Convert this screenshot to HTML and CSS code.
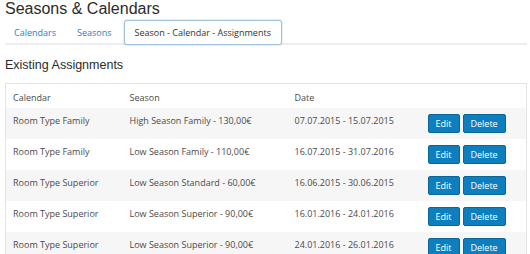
FILE: index.html
```html
<!DOCTYPE html>
<html lang="en">
<head>
<meta charset="utf-8">
<title>Seasons &amp; Calendars</title>
<link rel="stylesheet" href="styles.css">
</head>
<body>
<h1 class="title">Seasons &amp; Calendars</h1>
<ul class="tabs">
  <li class="tab"><a class="tab-link" href="#">Calendars</a></li>
  <li class="tab"><a class="tab-link" href="#">Seasons</a></li>
  <li class="tab"><a class="tab-link tab-active" href="#">Season - Calendar - Assignments</a></li>
</ul>
<h2 class="subtitle">Existing Assignments</h2>
<table class="grid">
  <colgroup>
    <col class="c-cal">
    <col class="c-season">
    <col class="c-date">
    <col>
  </colgroup>
  <thead>
    <tr><th>Calendar</th><th>Season</th><th>Date</th><th></th></tr>
  </thead>
  <tbody>
    <tr class="odd"><td>Room Type Family</td><td>High Season Family - 130,00€</td><td>07.07.2015 - 15.07.2015</td><td class="actions"><div class="btns"><button class="btn">Edit</button><button class="btn">Delete</button></div></td></tr>
    <tr><td>Room Type Family</td><td>Low Season Family - 110,00€</td><td>16.07.2015 - 31.07.2016</td><td class="actions"><div class="btns"><button class="btn">Edit</button><button class="btn">Delete</button></div></td></tr>
    <tr class="odd"><td>Room Type Superior</td><td>Low Season Standard - 60,00€</td><td>16.06.2015 - 30.06.2015</td><td class="actions"><div class="btns"><button class="btn">Edit</button><button class="btn">Delete</button></div></td></tr>
    <tr><td>Room Type Superior</td><td>Low Season Superior - 90,00€</td><td>16.01.2016 - 24.01.2016</td><td class="actions"><div class="btns"><button class="btn">Edit</button><button class="btn">Delete</button></div></td></tr>
    <tr class="odd"><td>Room Type Superior</td><td>Low Season Superior - 90,00€</td><td>24.01.2016 - 26.01.2016</td><td class="actions"><div class="btns"><button class="btn">Edit</button><button class="btn">Delete</button></div></td></tr>
  </tbody>
</table>
</body>
</html>
```

FILE: styles.css
```css
html, body {
  overflow: hidden;
}
body {
  margin: 0;
  padding: 0 3px 0 5px;
  background: #ffffff;
  color: #333333;
  font-family: "Liberation Sans", Arial, sans-serif;
}
.title {
  margin: 0;
  font-size: 16px;
  line-height: 18px;
  font-weight: normal;
  color: #2b2b2b;
}
.tabs {
  list-style: none;
  margin: 2px 0 0 0;
  padding: 0;
  display: flex;
  border-bottom: 2px solid #eeeeee;
  height: 23px;
}
.tab {
  margin-right: 3px;
}
.tab-link {
  display: block;
  box-sizing: border-box;
  height: 25px;
  padding: 0 8px;
  border: 1px solid transparent;
  border-radius: 3px;
  font-family: "Open Sans", sans-serif;
  font-size: 9px;
  line-height: 23px;
  color: #2a7cd0;
  text-decoration: none;
  white-space: nowrap;
}
.tab-active {
  padding: 0 10px;
  color: #333333;
  border-color: #9fc1dd;
  box-shadow: 0 0 2px rgba(102, 160, 210, 0.6);
  background: #ffffff;
}
.subtitle {
  margin: 13px 0 10px 0;
  font-size: 12.5px;
  line-height: 15px;
  font-weight: normal;
  color: #2b2b2b;
}
.grid {
  width: 100%;
  table-layout: fixed;
  border-collapse: collapse;
  border: 1px solid #e4e4e4;
  font-family: "Open Sans", sans-serif;
  font-size: 9px;
  line-height: 14px;
  color: #4a4a4a;
}
.c-cal { width: 117px; }
.c-season { width: 165px; }
.c-date { width: 133px; }
.grid th {
  text-align: left;
  font-weight: normal;
  padding: 7px 7px 3px 7px;
}
.grid td {
  padding: 6px 7px 4px 7px;
  vertical-align: top;
  white-space: nowrap;
}
.grid td.actions {
  padding: 6px 7px;
}
.odd {
  background: #f6f6f6;
}
.btns {
  display: flex;
  gap: 3px;
}
.btn {
  box-sizing: border-box;
  height: 19px;
  margin: 0;
  padding: 0 7px;
  border: 1px solid #0a6699;
  border-radius: 2px;
  background: #0d7fbf;
  color: #ffffff;
  font-family: "Open Sans", sans-serif;
  font-size: 9px;
  line-height: 17px;
}
```
